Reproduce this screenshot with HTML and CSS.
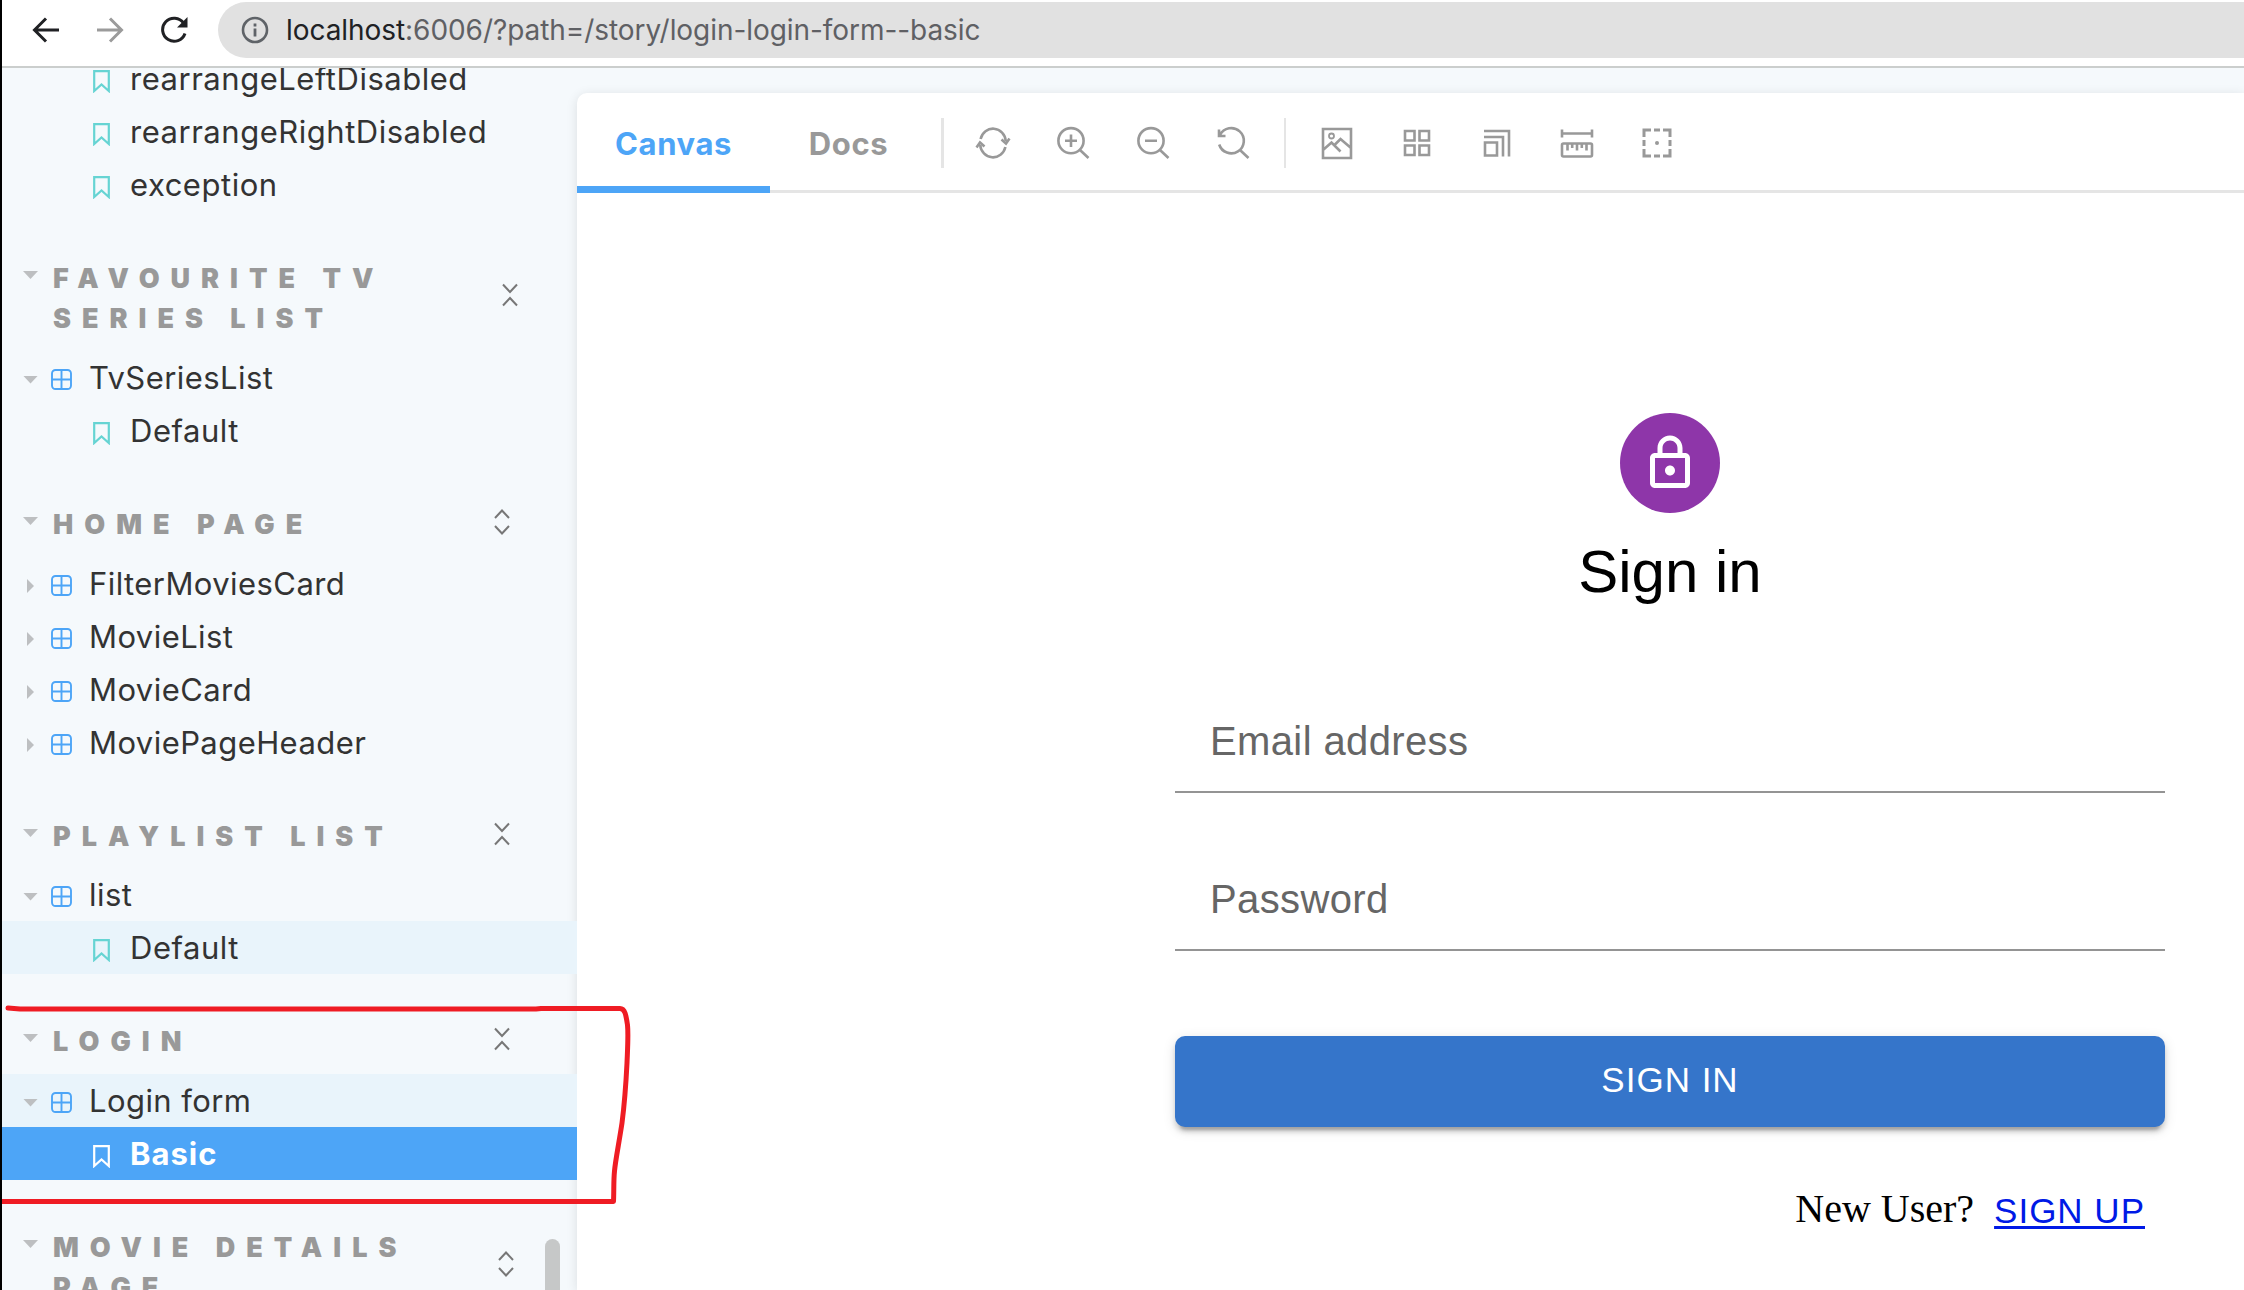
FILE: index.html
```html
<!DOCTYPE html>
<html lang="en">
<head>
<meta charset="utf-8">
<title>Login form - Basic</title>
<link rel="stylesheet" href="styles.css">
</head>
<body>
<svg class="defs" width="0" height="0" aria-hidden="true">
  <symbol id="bookmark" viewBox="0 0 17 23"><path d="M1.200 1.200H15.800V21L8.500 14.500L1.200 21Z" fill="none" stroke="currentColor" stroke-width="2.200"/></symbol>
  <symbol id="component" viewBox="0 0 21 21"><rect x="1" y="1" width="19" height="19" rx="3.5" fill="none" stroke="currentColor" stroke-width="1.9"/><path d="M10.5 1V20M1 10.5H20" stroke="currentColor" stroke-width="1.9"/></symbol>
  <symbol id="collapse" viewBox="0 0 16 24"><path d="M1 1.5L8 9L15 1.5M1 22.5L8 15L15 22.5" fill="none" stroke="currentColor" stroke-width="2"/></symbol>
  <symbol id="expand" viewBox="0 0 16 26"><path d="M1 9L8 1.5L15 9M1 17L8 24.5L15 17" fill="none" stroke="currentColor" stroke-width="2"/></symbol>
</svg>
<div class="window">
  <header class="browser">
    <svg class="nav" viewBox="0 0 28 28"><path d="M27 14H2.5M14 2.5L2.5 14L14 25.500" fill="none" stroke="#202124" stroke-width="3"/></svg>
    <svg class="nav" viewBox="0 0 28 28"><path d="M1 14H25.500M14 2.500L25.500 14L14 25.500" fill="none" stroke="#9b9b9b" stroke-width="3"/></svg>
    <svg class="nav" viewBox="0 0 28 28"><path d="M23.600 7.200A11.500 11.500 0 1 0 25 17.500" fill="none" stroke="#202124" stroke-width="3"/><path d="M27.500 1V11.500H17Z" fill="#202124"/></svg>
    <div class="omnibox">
      <svg class="info" viewBox="0 0 28 28"><circle cx="14" cy="14" r="12" fill="none" stroke="#5f6368" stroke-width="2.600"/><path d="M14 12.500V20.500M14 7.600V10.400" stroke="#5f6368" stroke-width="2.800"/></svg>
      <span class="url"><b>localhost</b>:6006/?path=/story/login-login-form--basic</span>
    </div>
  </header>
  <div class="app">
    <nav class="sidebar">
      <div class="row story"><svg class="bm"><use href="#bookmark"/></svg><span>rearrangeLeftDisabled</span></div>
      <div class="row story"><svg class="bm"><use href="#bookmark"/></svg><span>rearrangeRightDisabled</span></div>
      <div class="row story"><svg class="bm"><use href="#bookmark"/></svg><span>exception</span></div>

      <div class="heading wide"><i class="caret down"></i><h2>Favourite TV<br>Series List</h2><svg class="toggle"><use href="#collapse"/></svg></div>
      <div class="row"><i class="caret down"></i><svg class="cmp"><use href="#component"/></svg><span>TvSeriesList</span></div>
      <div class="row story"><svg class="bm"><use href="#bookmark"/></svg><span>Default</span></div>

      <div class="heading"><i class="caret down"></i><h2>Home Page</h2><svg class="toggle"><use href="#expand"/></svg></div>
      <div class="row"><i class="caret"></i><svg class="cmp"><use href="#component"/></svg><span>FilterMoviesCard</span></div>
      <div class="row"><i class="caret"></i><svg class="cmp"><use href="#component"/></svg><span>MovieList</span></div>
      <div class="row"><i class="caret"></i><svg class="cmp"><use href="#component"/></svg><span>MovieCard</span></div>
      <div class="row"><i class="caret"></i><svg class="cmp"><use href="#component"/></svg><span>MoviePageHeader</span></div>

      <div class="heading short"><i class="caret down"></i><h2>Playlist List</h2><svg class="toggle"><use href="#collapse"/></svg></div>
      <div class="row"><i class="caret down"></i><svg class="cmp"><use href="#component"/></svg><span>list</span></div>
      <div class="row story tinted"><svg class="bm"><use href="#bookmark"/></svg><span>Default</span></div>

      <div class="heading"><i class="caret down"></i><h2>Login</h2><svg class="toggle"><use href="#collapse"/></svg></div>
      <div class="row tinted"><i class="caret down"></i><svg class="cmp"><use href="#component"/></svg><span>Login form</span></div>
      <div class="row story selected"><svg class="bm"><use href="#bookmark"/></svg><span>Basic</span></div>

      <div class="heading mid"><i class="caret down"></i><h2>Movie Details<br>Page</h2><svg class="toggle"><use href="#expand"/></svg></div>
      <div class="scrollbar"></div>
    </nav>
    <main class="panel">
      <div class="toolbar">
        <div class="tab active"><span>Canvas</span></div>
        <div class="tab"><span>Docs</span></div>
        <div class="sep first"></div>
        <div class="tools">
          <svg viewBox="0 0 36 36"><path d="M5.600 14A12.800 13.500 0 0 1 30.800 16M30.400 22A12.800 13.500 0 0 1 5.200 20" /><path d="M26.500 14.500L31 18.500L34.500 13.500M1.500 22.500L5 17.500L9.500 21.500"/></svg>
          <svg viewBox="0 0 36 36"><circle cx="16" cy="15.700" r="12.600"/><path d="M10 15.700H22M16 9.500V22M25 25L33.500 33"/></svg>
          <svg viewBox="0 0 36 36"><circle cx="16" cy="15.700" r="12.600"/><path d="M10 15.700H22M25 25L33.500 33"/></svg>
          <svg viewBox="0 0 36 36"><path d="M5 10A12.600 12.600 0 1 1 4.200 19.500M4 4.500V11H10.500M25 25L33.500 33"/></svg>
        </div>
        <div class="sep"></div>
        <div class="tools second">
          <svg viewBox="0 0 36 36"><path d="M4 4H32V33H4ZM4 25L12.500 17.500L21.500 26.500M15.500 20L21.500 14L32 23"/><circle cx="12.500" cy="11" r="2.500" stroke-width="1.800"/></svg>
          <svg viewBox="0 0 36 36"><path d="M6 6H15.500V15.500H6ZM20.500 6H30V15.500H20.500ZM6 20.500H15.500V30H6ZM20.500 20.500H30V30H20.500Z"/></svg>
          <svg viewBox="0 0 36 36"><path d="M6 17.500H18V30.500H6ZM5 12H24V31.500M5 6H30V31.500"/></svg>
          <svg viewBox="0 0 36 36"><rect x="3" y="18.500" width="30" height="13" rx="1.500"/><path d="M3 4.500V12.500M33 4.500V12.500M3 8.500H33M8.500 18.500V25.500M13.200 18.500V23M18 18.500V25.500M22.800 18.500V23M27.500 18.500V25.500"/></svg>
          <svg viewBox="0 0 36 36"><path d="M5 12V5H12M15 5H21M24 5H31V12M31 15V21M31 24V31H24M21 31H15M12 31H5V24M5 21V15" stroke-width="3"/><circle cx="18" cy="18" r="2" fill="#999" stroke="none"/></svg>
        </div>
      </div>
      <form class="login">
        <div class="avatar"><svg viewBox="0 0 24 24"><path fill="#fff" d="M12 17c1.100 0 2-.9 2-2s-.9-2-2-2-2 .9-2 2 .9 2 2 2zm6-9h-1V6c0-2.760-2.240-5-5-5S7 3.240 7 6v2H6c-1.100 0-2 .9-2 2v10c0 1.100.9 2 2 2h12c1.100 0 2-.9 2-2V10c0-1.100-.9-2-2-2zM9 6c0-1.660 1.340-3 3-3s3 1.340 3 3v2H9V6zm9 14H6V10h12v10z"/></svg></div>
        <h1>Sign in</h1>
        <label class="field">Email address</label>
        <label class="field">Password</label>
        <div class="submit">SIGN IN</div>
        <p class="signup">New User?<a href="#">SIGN UP</a></p>
      </form>
    </main>
  </div>
  <svg class="marker" viewBox="0 0 640 210"><path d="M8 13L20 14H536L541 13.500H620C625 13.500 626 20 627.500 30C628.500 40 627.500 55 627 68C626 88 625 105 622 128C619 148 615.500 165 614.500 176C613.500 186 614 196 613.500 206.500H0" fill="none" stroke="#ef1c24" stroke-width="5" stroke-linejoin="round" stroke-linecap="round"/></svg>
</div>
</body>
</html>
```
FILE: styles.css
```css
* { box-sizing: border-box; }

body {
  margin: 0;
  background: #f5f9fc;
  font-family: Inter, "Liberation Sans", sans-serif;
}

.defs { position: absolute; }

.window {
  position: relative;
  display: flex;
  flex-direction: column;
  width: 2244px;
  height: 1290px;
  overflow: hidden;
  border-left: 2px solid #000;
}

.browser {
  display: flex;
  align-items: flex-start;
  flex: none;
  height: 68px;
  padding: 2px 0 0 30px;
  background: #fff;
  border-bottom: 2px solid #cbcecd;
}

.nav { width: 28px; height: 28px; margin: 14px 36px 0 0; }

.omnibox {
  display: flex;
  align-items: center;
  flex: 1;
  height: 56px;
  margin-left: -6px;
  padding-left: 23px;
  background: #e1e1e1;
  border-radius: 28px 0 0 28px;
}

.info { width: 28px; height: 28px; margin-right: 17px; }

.url { color: #5f6064; font-size: 28px; white-space: nowrap; letter-spacing: -.06px; }
.url b { color: #202124; font-weight: 400; }

.app { display: flex; flex: 1; min-height: 0; }

.sidebar {
  position: relative;
  flex: none;
  width: 575px;
  margin-top: -16px;
  overflow: hidden;
  clip-path: inset(16px 0 0 0);
}

.row {
  display: flex;
  align-items: center;
  height: 53px;
  padding: 0 0 0 21px;
  color: #333;
  font-size: 31px;
  letter-spacing: .43px;
  white-space: nowrap;
}
.row.story { padding-left: 91px; letter-spacing: .52px; }
.row.tinted { background: #e9f4fb; }
.row.selected { background: #4da5f7; color: #fff; font-weight: 700; letter-spacing: 1px; }

.bm { width: 17px; height: 23px; margin: 6px 20px 0 0; color: #66d4d3; }
.selected .bm { color: #fff; }
.cmp { width: 21px; height: 21px; margin: 4px 17px 0 13px; color: #4da5f7; }

.caret {
  width: 7px;
  height: 14px;
  margin: 5px 4px 0;
  background: #bdbfc1;
  clip-path: polygon(0 0, 100% 50%, 0 100%);
}
.caret.down {
  width: 15px;
  height: 8px;
  margin: 4px 0 0;
  clip-path: polygon(0 0, 100% 0, 50% 100%);
}

.heading {
  display: flex;
  height: 100px;
  padding: 48px 67px 0 21px;
  color: #999;
}
.heading.wide { height: 140px; padding-right: 59px; }
.heading.short { height: 99px; }
.heading.mid { height: 140px; padding-right: 63px; }
.heading .caret { margin-top: 12px; }
.heading h2 {
  flex: 1;
  margin: 0 0 0 15px;
  font-size: 27px;
  font-weight: 900;
  line-height: 40px;
  letter-spacing: 11px;
  text-transform: uppercase;
  white-space: nowrap;
}
.toggle { width: 16px; height: 26px; margin-top: 4px; color: #777; }
.wide .toggle, .mid .toggle { margin-top: 23px; }

.scrollbar {
  position: absolute;
  right: 17px;
  bottom: 0;
  width: 15px;
  height: 51px;
  background: #c6c8c8;
  border-radius: 8px 8px 0 0;
}

.panel {
  flex: 1;
  margin-top: 25px;
  background: #fff;
  border-radius: 10px 0 0 0;
  box-shadow: 0 2px 12px rgba(0, 0, 0, .11);
}

.toolbar {
  display: flex;
  height: 100px;
  border-bottom: 3px solid #e5e5e5;
}
.tab {
  display: flex;
  align-items: center;
  justify-content: center;
  width: 157px;
  height: 100px;
  color: #999;
  font-size: 31px;
  font-weight: 700;
  letter-spacing: .6px;
}
.tab.active { width: 193px; color: #4da5f7; box-shadow: inset 0 -7px #4da5f7; }
.sep { width: 2px; height: 50px; margin-top: 25px; background: #e5e5e5; }
.sep.first { width: 3px; margin-left: 14px; }
.tools { display: flex; gap: 44px; padding: 32px 33px 0 31px; }
.tools svg {
  width: 36px;
  height: 36px;
  fill: none;
  stroke: #999;
  stroke-width: 2.6;
}
.tools.second { padding-left: 33px; }

.login {
  display: flex;
  flex-direction: column;
  width: 990px;
  margin: 220px 0 0 598px;
  font-family: "Liberation Sans", Arial, sans-serif;
}
.avatar {
  display: flex;
  align-items: center;
  justify-content: center;
  align-self: center;
  width: 100px;
  height: 100px;
  background: #8e36a9;
  border-radius: 50%;
}
.avatar svg { width: 60px; height: 60px; }
.login h1 {
  margin: 19px 0 67px;
  font-size: 60px;
  font-weight: 400;
  line-height: 80px;
  text-align: center;
}
.field {
  height: 114px;
  margin-bottom: 44px;
  padding: 39px 0 0 35px;
  border-bottom: 2px solid #949494;
  color: #666;
  font-size: 40px;
  line-height: 46px;
  letter-spacing: .375px;
}
.submit {
  height: 91px;
  margin-top: 41px;
  background: #3575ca;
  border-radius: 10px;
  box-shadow: 0 8px 3px -5px rgba(0, 0, 0, .2), 0 5px 5px rgba(0, 0, 0, .14), 0 3px 13px rgba(0, 0, 0, .12);
  color: #fff;
  font-size: 35px;
  line-height: 88px;
  letter-spacing: 1px;
  text-align: center;
}
.signup {
  display: flex;
  justify-content: flex-end;
  align-items: baseline;
  gap: 20px;
  margin: 59px 20px 0 0;
  font-family: "Liberation Serif", "Times New Roman", serif;
  font-size: 40px;
  line-height: 46px;
}
.signup a {
  position: relative;
  top: 1px;
  color: #001ae6;
  font-family: "Liberation Sans", Arial, sans-serif;
  font-size: 35px;
  letter-spacing: 1px;
  text-decoration-thickness: 3px;
  text-underline-offset: 3px;
  text-decoration-skip-ink: none;
}

.marker {
  position: absolute;
  left: -2px;
  top: 995px;
  width: 640px;
  height: 210px;
}
```
